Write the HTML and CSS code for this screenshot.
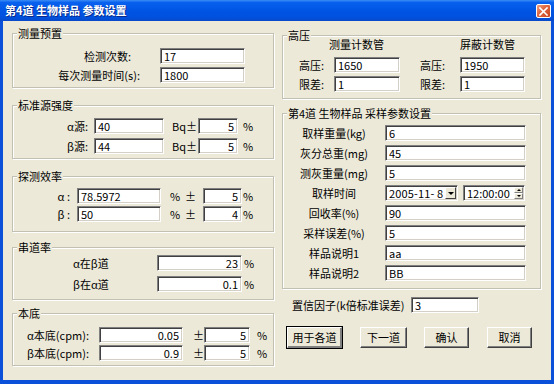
FILE: index.html
```html
<!DOCTYPE html>
<html lang="zh-CN">
<head>
    <meta charset="UTF-8">
    <title>第4道 生物样品 参数设置</title>
    <link rel="stylesheet" href="styles.css">
</head>
<body>
    <div class="window">
        <div class="titlebar">
            <span class="title">第4道 生物样品 参数设置</span>
            <span class="close-btn">
                <svg width="9" height="9" viewBox="0 0 9 9">
                    <path d="M1 1L8 8M8 1L1 8" stroke="#fff" stroke-width="1.6" stroke-linecap="square"/>
                </svg>
            </span>
        </div>

        <div class="dialog">
            <div class="col col-left">
                <div class="group g-preset">
                    <span class="legend">测量预置</span>
                    <div class="row">
                        <label class="lbl pad9">检测次数:</label>
                        <input class="field" type="text" value="17">
                    </div>
                    <div class="row">
                        <label class="lbl">每次测量时间(s):</label>
                        <input class="field" type="text" value="1800">
                    </div>
                </div>

                <div class="group g-source">
                    <span class="legend">标准源强度</span>
                    <div class="row">
                        <label class="lbl">α源:</label>
                        <input class="field f-main" type="text" value="40">
                        <span class="unit">Bq±</span>
                        <input class="field f-pm num" type="text" value="5">
                        <span class="pct">%</span>
                    </div>
                    <div class="row">
                        <label class="lbl">β源:</label>
                        <input class="field f-main" type="text" value="44">
                        <span class="unit">Bq±</span>
                        <input class="field f-pm num" type="text" value="5">
                        <span class="pct">%</span>
                    </div>
                </div>

                <div class="group g-eff">
                    <span class="legend">探测效率</span>
                    <div class="row">
                        <label class="lbl">α :</label>
                        <input class="field f-main" type="text" value="78.5972">
                        <span class="unit">%  ±</span>
                        <input class="field f-pm num" type="text" value="5">
                        <span class="pct">%</span>
                    </div>
                    <div class="row">
                        <label class="lbl">β :</label>
                        <input class="field f-main" type="text" value="50">
                        <span class="unit">%  ±</span>
                        <input class="field f-pm num" type="text" value="4">
                        <span class="pct">%</span>
                    </div>
                </div>

                <div class="group g-cross">
                    <span class="legend">串道率</span>
                    <div class="row">
                        <label class="lbl">α在β道</label>
                        <input class="field num" type="text" value="23">
                        <span class="pct">%</span>
                    </div>
                    <div class="row">
                        <label class="lbl">β在α道</label>
                        <input class="field num" type="text" value="0.1">
                        <span class="pct">%</span>
                    </div>
                </div>

                <div class="group g-bg">
                    <span class="legend">本底</span>
                    <div class="row">
                        <label class="lbl">α本底(cpm):</label>
                        <input class="field f-main num" type="text" value="0.05">
                        <span class="unit">±</span>
                        <input class="field f-pm num" type="text" value="5">
                        <span class="pct">%</span>
                    </div>
                    <div class="row">
                        <label class="lbl">β本底(cpm):</label>
                        <input class="field f-main num" type="text" value="0.9">
                        <span class="unit">±</span>
                        <input class="field f-pm num" type="text" value="5">
                        <span class="pct">%</span>
                    </div>
                </div>
            </div>

            <div class="col col-right">
                <div class="group g-hv">
                    <span class="legend">高压</span>
                    <div class="hv-head">
                        <span class="hv-title">测量计数管</span>
                        <span>屏蔽计数管</span>
                    </div>
                    <div class="row">
                        <label class="lbl">高压:</label>
                        <input class="field f-a" type="text" value="1650">
                        <label class="lbl lbl-b">高压:</label>
                        <input class="field f-b" type="text" value="1950">
                    </div>
                    <div class="row">
                        <label class="lbl">限差:</label>
                        <input class="field f-a" type="text" value="1">
                        <label class="lbl lbl-b">限差:</label>
                        <input class="field f-b" type="text" value="1">
                    </div>
                </div>

                <div class="group g-sample">
                    <span class="legend">第4道 生物样品 采样参数设置</span>
                    <div class="row">
                        <label class="lbl">取样重量(kg)</label>
                        <input class="field" type="text" value="6">
                    </div>
                    <div class="row">
                        <label class="lbl">灰分总重(mg)</label>
                        <input class="field" type="text" value="45">
                    </div>
                    <div class="row">
                        <label class="lbl">测灰重量(mg)</label>
                        <input class="field" type="text" value="5">
                    </div>
                    <div class="row">
                        <label class="lbl">取样时间</label>
                        <div class="field picker date">
                            <span class="pick-text">2005-11- 8</span>
                            <span class="drop-btn"><span class="tri"></span></span>
                        </div>
                        <div class="field picker time">
                            <span>12:00:00</span>
                            <span class="spin">
                                <span class="spin-up"></span>
                                <span class="spin-down"></span>
                            </span>
                        </div>
                    </div>
                    <div class="row">
                        <label class="lbl">回收率(%)</label>
                        <input class="field" type="text" value="90">
                    </div>
                    <div class="row">
                        <label class="lbl">采样误差(%)</label>
                        <input class="field" type="text" value="5">
                    </div>
                    <div class="row">
                        <label class="lbl">样品说明1</label>
                        <input class="field" type="text" value="aa">
                    </div>
                    <div class="row">
                        <label class="lbl">样品说明2</label>
                        <input class="field" type="text" value="BB">
                    </div>
                </div>

                <div class="row conf-row">
                    <label class="lbl">置信因子(k倍标准误差)</label>
                    <input class="field" type="text" value="3">
                </div>

                <div class="btn-row">
                    <button class="btn btn-default">用于各道</button>
                    <button class="btn btn-next">下一道</button>
                    <button class="btn btn-ok">确认</button>
                    <button class="btn btn-cancel">取消</button>
                </div>
            </div>
        </div>
    </div>
</body>
</html>
```

FILE: styles.css
```css
* {
    margin: 0;
    padding: 0;
    box-sizing: border-box;
}

body {
    width: 554px;
    height: 384px;
    overflow: hidden;
    font-family: "Noto Sans CJK SC", "Liberation Sans", sans-serif;
    font-size: 11px;
    color: #000;
}

.window {
    width: 554px;
    height: 384px;
    background: #0a50d8;
    padding: 0 3px 4px 3px;
    display: flex;
    flex-direction: column;
}

/* title bar */
.titlebar {
    height: 21px;
    margin: 0 -3px;
    padding: 0 3px 0 5px;
    display: flex;
    align-items: center;
    justify-content: space-between;
    background: linear-gradient(#3b8cf5 0%, #0860ee 12%, #0055e5 50%, #0050dc 85%, #0a48c8 100%);
}

.title {
    color: #fff;
    font-weight: bold;
    font-size: 11px;
    line-height: 13px;
    text-shadow: 1px 1px 0 #0b2a8a;
    white-space: pre;
}

.close-btn {
    width: 15px;
    height: 14px;
    margin-top: 1px;
    border: 1px solid #fff;
    border-radius: 2px;
    background: linear-gradient(135deg, #f0a080 0%, #e06a45 40%, #c9431d 100%);
    display: flex;
    align-items: center;
    justify-content: center;
}

/* dialog body */
.dialog {
    flex: 1;
    background: #ece9d8;
    padding: 0 10px 0 9px;
    display: flex;
    gap: 8px;
}

.col {
    display: flex;
    flex-direction: column;
}

.col-left {
    width: 262px;
}

.col-right {
    width: 259px;
}

.group {
    position: relative;
    border: 1px solid #c2c0b2;
    box-shadow: inset 1px 1px 0 #fff, 1px 1px 0 #fff;
    display: flex;
    flex-direction: column;
}

.legend {
    position: absolute;
    top: -7px;
    left: 4px;
    padding: 0 1px;
    background: #ece9d8;
    line-height: 12px;
    white-space: pre;
}

.row {
    display: flex;
    align-items: center;
    height: 16px;
    white-space: pre;
}

.lbl {
    line-height: 16px;
}

.field {
    height: 16px;
    width: 85px;
    font: inherit;
    line-height: 12px;
    padding: 0 3px;
    background: #fff;
    color: #000;
    border: 1px solid;
    border-color: #808080 #fff #fff #808080;
    box-shadow: inset 1px 1px 0 #404040, inset -1px -1px 0 #d4d0c8;
    outline: none;
}

.num {
    text-align: right;
}

.pct {
    margin-left: 2px;
}

/* 测量预置 */
.g-preset {
    height: 55px;
    margin-top: 12px;
    padding-top: 14px;
    gap: 3px;
}

.g-preset .lbl {
    width: 127px;
    text-align: right;
    margin-right: 20px;
}

.g-preset .pad9 {
    padding-right: 9px;
}

/* 标准源强度 */
.g-source {
    height: 54px;
    margin-top: 17px;
    padding-top: 12px;
    gap: 4px;
}

.g-source .lbl {
    width: 75px;
    text-align: right;
}

.g-source .f-main {
    width: 70px;
    margin-left: 6px;
}

.g-source .unit {
    width: 22px;
    margin-left: 8px;
}

.g-source .f-pm {
    width: 40px;
    margin-left: 4px;
}

.g-source .pct {
    margin-left: 5px;
}

/* 探测效率 */
.g-eff {
    height: 56px;
    margin-top: 17px;
    padding-top: 11px;
    gap: 2px;
}

.g-eff .lbl {
    width: 57px;
    text-align: right;
}

.g-eff .f-main {
    width: 84px;
    margin-left: 7px;
}

.g-eff .unit {
    width: 24px;
    margin-left: 9px;
}

.g-eff .f-pm {
    width: 39px;
    margin-left: 9px;
}

.g-eff .pct {
    margin-left: 1px;
}

/* 串道率 */
.g-cross {
    height: 53px;
    margin-top: 15px;
    padding-top: 7px;
    gap: 5px;
}

.g-cross .lbl {
    width: 144px;
    padding-left: 60px;
}

/* 本底 */
.g-bg {
    height: 53px;
    margin-top: 13px;
    padding-top: 13px;
    gap: 2px;
}

.g-bg .lbl {
    width: 72px;
    margin-left: 14px;
}

.g-bg .f-main {
    width: 84px;
}

.g-bg .unit {
    width: 11px;
    margin-left: 10px;
}

.g-bg .f-pm {
    width: 46px;
}

.g-bg .pct {
    margin-left: 7px;
}

/* 高压 */
.g-hv {
    height: 64px;
    margin-top: 14px;
    padding-top: 2px;
}

.hv-head {
    display: flex;
    height: 12px;
    line-height: 12px;
    padding-left: 46px;
    margin-bottom: 7px;
}

.hv-title {
    width: 131px;
}

.g-hv .row + .row {
    margin-top: 3px;
}

.g-hv .lbl {
    width: 35px;
    margin-left: 16px;
}

.g-hv .f-a {
    width: 66px;
}

.g-hv .lbl-b {
    width: 40px;
    margin-left: 20px;
}

.g-hv .f-b {
    width: 65px;
}

/* 采样参数 */
.g-sample {
    height: 176px;
    margin-top: 14px;
    padding-top: 11px;
    gap: 4px;
}

.g-sample .lbl {
    width: 102px;
    text-align: center;
}

.g-sample .field {
    width: 141px;
}

.g-sample .picker {
    display: flex;
    align-items: center;
    justify-content: space-between;
    padding: 0 1px 0 3px;
}

.pick-text {
    letter-spacing: 0.15px;
}

.g-sample .date {
    width: 73px;
}

.g-sample .time {
    width: 62px;
    margin-left: 5px;
}

.drop-btn {
    width: 11px;
    height: 12px;
    background: #ece9d8;
    border: 1px solid;
    border-color: #fff #404040 #404040 #fff;
    display: flex;
    align-items: center;
    justify-content: center;
}

.tri {
    width: 0;
    height: 0;
    border-left: 3px solid transparent;
    border-right: 3px solid transparent;
    border-top: 3px solid #000;
}

.spin {
    width: 9px;
    height: 12px;
    display: flex;
    flex-direction: column;
}

.spin-up,
.spin-down {
    flex: 1;
    background: #ece9d8;
    border: 1px solid;
    border-color: #fff #808080 #808080 #fff;
    position: relative;
}

.spin-up::after,
.spin-down::after {
    content: "";
    position: absolute;
    left: 2px;
    top: 1px;
    border-left: 2px solid transparent;
    border-right: 2px solid transparent;
}

.spin-up::after {
    border-bottom: 2px solid #000;
}

.spin-down::after {
    border-top: 2px solid #000;
}

/* 置信因子 */
.conf-row {
    margin-top: 8px;
}

.conf-row .lbl {
    width: 119px;
    margin-left: 10px;
}

.conf-row .field {
    width: 68px;
}

/* buttons */
.btn-row {
    display: flex;
    margin-top: 14px;
}

.btn {
    height: 21px;
    font: inherit;
    line-height: 17px;
    background: #ece9d8;
    color: #000;
    border: 1px solid;
    border-color: #fff #404040 #404040 #fff;
    box-shadow: inset -1px -1px 0 #808080;
}

.btn-default {
    width: 55px;
    margin-left: 5px;
    border-color: #fff #808080 #808080 #fff;
    box-shadow: inset -1px -1px 0 #808080, 0 0 0 1px #000;
}

.btn-next {
    width: 47px;
    margin-left: 18px;
}

.btn-ok {
    width: 45px;
    margin-left: 17px;
}

.btn-cancel {
    width: 45px;
    margin-left: 18px;
}
```
